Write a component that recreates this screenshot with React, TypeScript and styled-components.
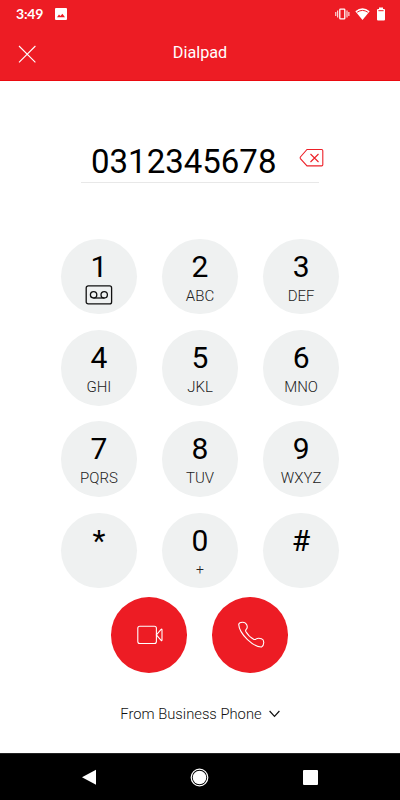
import React from 'react';
import styled, { createGlobalStyle } from 'styled-components';

const GlobalStyle = createGlobalStyle`
  * { box-sizing: border-box; }
  body { margin: 0; background: #fff; font-family: Roboto, sans-serif; }
  button { border: 0; padding: 0; background: none; font: inherit; color: inherit; }
  svg { display: block; flex: none; }
`;

const Screen = styled.main`
  width: 400px;
  height: 800px;
  overflow: hidden;
  display: flex;
  flex-direction: column;
  background: #fff;
`;

const Header = styled.header`
  height: 81px;
  flex: none;
  background: #ed1c24;
  color: #fff;
  border-bottom: 1px solid #ea0a10;
`;

const StatusBar = styled.div`
  height: 28px;
  padding: 0 13px 0 16px;
  display: flex;
  align-items: center;
`;

const Clock = styled.span`
  width: 39px;
  font: 700 14px/28px Lato, sans-serif;
  letter-spacing: -0.2px;
`;

const StatusIcons = styled.div`
  margin-left: auto;
  display: flex;
  align-items: center;
  gap: 4px;
`;

const TitleBar = styled.div`
  height: 52px;
  display: grid;
  grid-template-columns: 54px 1fr 54px;
  align-items: center;
`;

const CloseButton = styled.button`
  padding: 0 0 0 18px;
`;

const Title = styled.h1`
  margin: 0 0 3px;
  text-align: center;
  font-size: 16.2px;
  font-weight: 400;
  line-height: 20px;
`;

const NumberField = styled.div`
  width: 238px;
  height: 45px;
  margin: 57px auto 55.5px;
  padding-left: 10px;
  flex: none;
  display: flex;
  border-bottom: 1px solid #e8e8e8;
`;

const PhoneNumber = styled.span`
  width: 208px;
  flex: none;
  font-size: 33px;
  line-height: 48px;
  white-space: nowrap;
`;

const EraseButton = styled.button`
  height: 39px;
  flex: none;
`;

const Keypad = styled.div`
  flex: none;
  display: grid;
  grid-template-columns: repeat(3, 75.7px);
  gap: 15.7px 25.4px;
  justify-content: center;
`;

const Key = styled.button`
  width: 75.7px;
  height: 75.7px;
  border-radius: 50%;
  background: #eff1f1;
  display: flex;
  flex-direction: column;
  align-items: center;
`;

const Digit = styled.span`
  height: 46px;
  padding-top: 10px;
  font-size: 30px;
  line-height: 36px;
  color: #000;
`;

const Letters = styled.span<{ $small?: boolean }>`
  margin-top: ${(p) => (p.$small ? 1 : 2)}px;
  font-size: ${(p) => (p.$small ? 14 : 15)}px;
  font-weight: 300;
  line-height: 18px;
  color: #222;
`;

const CallActions = styled.div`
  margin: 9px 0.6px 0 0;
  flex: none;
  display: flex;
  justify-content: center;
  gap: 25.4px;
`;

const CallButton = styled.button`
  width: 75.7px;
  height: 75.7px;
  padding-left: 0.8px;
  border-radius: 50%;
  background: #ed1c24;
  display: flex;
  align-items: center;
  justify-content: center;
`;

const SourceSelect = styled.button`
  margin: 30.5px auto 0;
  height: 20px;
  display: flex;
  align-items: center;
  gap: 7px;
  font-size: 14.75px;
  font-weight: 300;
  line-height: 20px;
  color: #111;
  white-space: nowrap;
`;

const NavBar = styled.nav`
  margin-top: auto;
  height: 47px;
  flex: none;
  background: #000;
  border-top: 1px solid #222;
  padding-right: 1px;
  display: grid;
  grid-template-columns: repeat(3, 111px);
  justify-content: center;
  justify-items: center;
  align-items: center;
`;

const VoicemailIcon = () => (
  <svg width="28" height="20" viewBox="0 0 28 20" fill="none" stroke="#111" strokeWidth="1.3">
    <rect x="1.2" y="0.9" width="25.4" height="18" rx="2" />
    <circle cx="8.6" cy="9.8" r="3.2" />
    <circle cx="19.2" cy="9.8" r="3.2" />
    <path d="M8.6 13h10.6" />
  </svg>
);

const keys = [
  ['1', ''], ['2', 'ABC'], ['3', 'DEF'],
  ['4', 'GHI'], ['5', 'JKL'], ['6', 'MNO'],
  ['7', 'PQRS'], ['8', 'TUV'], ['9', 'WXYZ'],
  ['*', ''], ['0', '+'], ['#', ''],
];

export default function App() {
  return (
    <>
      <GlobalStyle />
      <Screen>
        <Header>
          <StatusBar>
            <Clock>3:49</Clock>
            <svg width="12" height="12" viewBox="0 0 12 12">
              <path fill="#fff" fillRule="evenodd" d="M1 0h10q1 0 1 1v10q0 1-1 1H1q-1 0-1-1V1q0-1 1-1ZM2 9.2h8L7.4 5.7 5.4 8.1 4 6.5Z" />
            </svg>
            <StatusIcons>
              <svg width="15" height="12" viewBox="0 0 15 12" fill="none" stroke="#fff">
                <rect x="4.8" y="1.1" width="5" height="9.8" rx=".7" strokeWidth="1.3" />
                <path d="M2.7 2.5v7M12 2.5v7M.8 4v4M13.9 4v4" />
              </svg>
              <svg width="17" height="14" viewBox="0 0 17 14">
                <path fill="#fff" d="M1.3 4.2Q8.5-1.6 15.7 4.2L8.5 13Z" />
                <path fill="none" stroke="#ed1c24" d="M3.2 5.2Q8.5 1.6 13.8 5.2" />
              </svg>
              <svg width="12" height="14" viewBox="0 0 12 14">
                <path fill="#fff" d="M4 .6h4v1.4h1q1 0 1 1v9.5q0 1-1 1H3q-1 0-1-1V3q0-1 1-1h1Z" />
                <path stroke="#ed1c24" d="M3.4 3.7h5.2" />
              </svg>
            </StatusIcons>
          </StatusBar>
          <TitleBar>
            <CloseButton aria-label="Close">
              <svg width="18" height="18" viewBox="0 0 18 18" stroke="#fff" strokeWidth="1.1">
                <path d="M1 1l16.4 16.4M17.4 1L1 17.4" />
              </svg>
            </CloseButton>
            <Title>Dialpad</Title>
          </TitleBar>
        </Header>

        <NumberField>
          <PhoneNumber>0312345678</PhoneNumber>
          <EraseButton aria-label="Delete">
            <svg width="25" height="20" viewBox="0 0 25 20" fill="none" stroke="#ed2028" strokeWidth="1.1">
              <path d="M8 1.5h14.6q1.2 0 1.2 1.2v14q0 1.2-1.2 1.2H8L1.4 10.6Q.9 9.8 1.4 9ZM11.5 6l8 8M19.5 6l-8 8" />
            </svg>
          </EraseButton>
        </NumberField>

        <Keypad>
          {keys.map(([digit, letters]) => (
            <Key key={digit}>
              <Digit>{digit}</Digit>
              {digit === '1' && <VoicemailIcon />}
              {letters && <Letters $small={letters === '+'}>{letters}</Letters>}
            </Key>
          ))}
        </Keypad>

        <CallActions>
          <CallButton aria-label="Video call">
            <svg width="26" height="20" viewBox="0 0 26 20" fill="none" stroke="#fff" strokeWidth="1.1">
              <rect x=".8" y="1.2" width="18.6" height="17.3" rx="2" />
              <path d="M19.4 9.9l4.7-5.4q.9-.9.9.3v10.3q0 1.2-.9.3Z" />
            </svg>
          </CallButton>
          <CallButton aria-label="Call">
            <svg width="28" height="28" viewBox="0 0 28 28" fill="none" stroke="#fff" strokeWidth="1.1" strokeLinejoin="round">
              <path d="M1.7 3.4Q1.8 1.5 5.5 1.2Q8.5 1.1 9.7 3.8Q11 6.7 9.2 8.4Q8.3 9.3 8.8 10.4Q11.5 15.3 17 18.4Q18.2 18.9 19.2 17.9Q21.3 16.6 24.5 17.8Q27.1 18.8 26.7 22Q26.5 25.2 24.5 26Q18.7 26.3 10.5 18.6Q2.1 10.5 1.7 3.4Z" />
            </svg>
          </CallButton>
        </CallActions>

        <SourceSelect>
          From Business Phone
          <svg width="11" height="8" viewBox="0 0 11 8" fill="none" stroke="#111" strokeWidth="1.2">
            <path d="M.6 1l4.9 5.3L10.4 1" />
          </svg>
        </SourceSelect>

        <NavBar>
          <svg width="16" height="16" viewBox="0 0 16 16"><path fill="#fff" d="M15 .7v15L1 8.2Z" /></svg>
          <svg width="19" height="19" viewBox="0 0 19 19">
            <circle cx="9.5" cy="9.5" r="8.3" fill="none" stroke="#fff" strokeWidth="1.2" />
            <circle cx="9.5" cy="9.5" r="6.8" fill="#fff" />
          </svg>
          <svg width="15" height="15" viewBox="0 0 15 15"><rect width="15" height="15" rx="1" fill="#fff" /></svg>
        </NavBar>
      </Screen>
    </>
  );
}
